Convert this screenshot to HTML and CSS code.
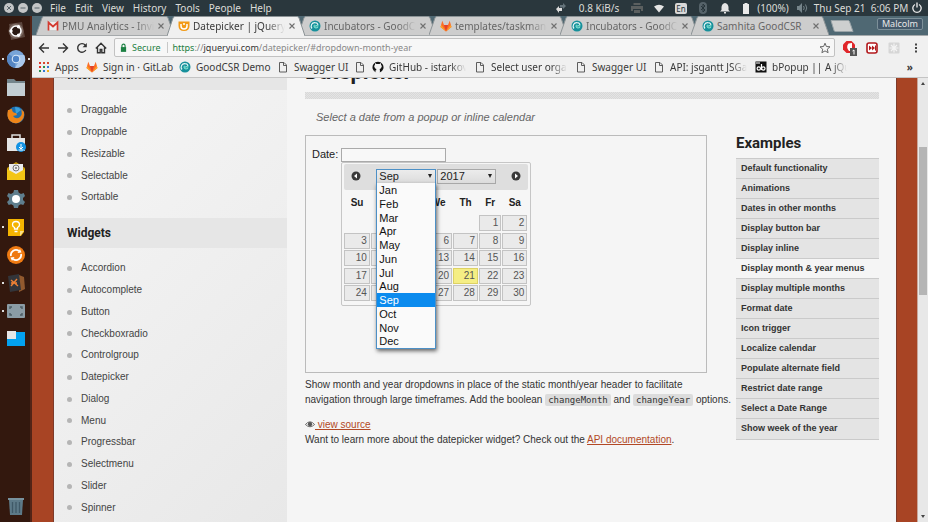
FILE: index.html
```html
<!DOCTYPE html>
<html lang="en">
<head>
<meta charset="utf-8">
<title>Datepicker | jQuery UI</title>
<link rel="stylesheet" href="styles.css">
</head>
<body>
<svg class="sprite" aria-hidden="true">
  <symbol id="swirl" viewBox="0 0 12 12"><circle cx="6" cy="6" r="5.5" fill="#17909b"/><path d="M3 8.5A3.6 3.6 0 0 1 6 2.6c2 0 3 1.300 2.800 2.600" fill="none" stroke="#e4f4f4" stroke-width="1.200"/><path d="M5.500 4.800c-1.400 2 .6 4.200 3.500 2.400M6 6.300c1-.9 2.300-.9 3.400 0" fill="none" stroke="#7fe0d0" stroke-width="1.100"/></symbol>
  <symbol id="fox" viewBox="0 0 12 12"><path d="M6 11.500 0.500 7 2.300 0.800 4 5h4l1.700-4.200L11.500 7z" fill="#fc6d26"/><path d="M6 11.500 4 5h4z" fill="#e24329"/><path d="M.5 7 6 11.500 1.400 5zM11.500 7 6 11.500 10.600 5z" fill="#fca326"/></symbol>
  <symbol id="doc" viewBox="0 0 12 12"><path d="M2.500 1.500h4.500l2.500 2.500v7h-7zM6.500 1.500v3h3" fill="none" stroke="#5d5d5d" stroke-width="1"/></symbol>
  <symbol id="tabshape" viewBox="0 0 138 20" preserveAspectRatio="none"><path d="M0 20 6 2Q6.500.5 8 .5H130Q131.500.5 132 2L138 20" fill="currentColor" stroke="#8b9295" stroke-width="1"/></symbol>
  <symbol id="x" viewBox="0 0 8 8"><path d="M1.500 1.500l5 5M6.500 1.500l-5 5" stroke="#707070" stroke-width="1.100"/></symbol>
</svg>

<header class="menubar">
  <div class="winbtns">
    <button aria-label="Close"><svg viewBox="0 0 10 10"><circle cx="5" cy="5" r="5"/><path d="M3 3l4 4M7 3 3 7"/></svg></button>
    <button aria-label="Minimize"><svg viewBox="0 0 10 10"><circle cx="5" cy="5" r="5"/><path d="M2.500 5h5"/></svg></button>
    <button aria-label="Restore"><svg viewBox="0 0 10 10"><circle cx="5" cy="5" r="5"/><path d="M2.500 5h5"/></svg></button>
  </div>
  <nav class="menus"><button>File</button><button>Edit</button><button>View</button><button>History</button><button>Tools</button><button>People</button><button>Help</button></nav>
  <div class="tray">
    <svg viewBox="0 0 12 12"><path d="M2 7l3-3v2h3v3H5v2z" fill="#ddd"/><path d="M6 3h3V1l3 3-3 3V5.500H6z" fill="#65737a"/></svg>
    <span>0.8 KiB/s</span>
    <svg viewBox="0 0 12 12"><path d="M2.500 1h7v2h-7zM0 4h12v5h-2V7H2v2H0zM3 8h6v3H3z" fill="#5b5f5f"/></svg>
    <svg viewBox="0 0 12 12"><path d="M1 4.500q5-3.500 10 0L6 10.500z" fill="#e4e4e4"/></svg>
    <span class="lang">En</span>
    <svg viewBox="0 0 12 12"><rect x="2" y="0" width="8" height="12" rx="4" fill="#56636a"/><path d="M4 4l4 4-2 2V2l2 2-4 4" fill="none" stroke="#27343a"/></svg>
    <svg viewBox="0 0 12 12"><path d="M1 9.500 2.500 8V5Q3 1.500 6 1q3 .5 3.500 4v3L11 9.500zM5 10h2v1.500H5z" fill="#e4e4e4"/></svg>
    <svg viewBox="0 0 12 12"><path d="M4.500 1h3v1h1.500v10h-6V2h1.500z" fill="#e9e9e9"/></svg>
    <span>(100%)</span>
    <svg viewBox="0 0 12 12"><path d="M1 4h2l3-3v10L3 8H1z" fill="#75848a"/><path d="M7.500 4q1.500 2 0 4M9.500 2.500q2.500 3.500 0 7" fill="none" stroke="#75848a"/></svg>
    <span>Thu Sep 21 &nbsp;6:06 PM</span>
    <svg viewBox="0 0 12 12"><path d="M4 2.500a4.200 4.200 0 1 0 4 0M6 .5v5" fill="none" stroke="#e4e4e4" stroke-width="1.400"/></svg>
  </div>
</header>

<div class="desktop">
  <aside class="launcher" aria-label="Launcher">
    <svg viewBox="0 0 18 18"><path d="M2 2 15 0l3 15L4 18Z" fill="#5c463d"/><circle cx="9" cy="9" r="7.500" fill="#9c8e87" opacity=".5"/><circle cx="9" cy="9" r="5" fill="#2a1a14" stroke="#fff" stroke-width="1.600"/><circle cx="4" cy="9" r="1.700" fill="#fff"/><circle cx="11.500" cy="4.700" r="1.700" fill="#fff"/><circle cx="11.500" cy="13.300" r="1.700" fill="#fff"/></svg>
    <svg class="running" viewBox="0 0 18 18"><circle cx="9" cy="9" r="9" fill="#78a4d8"/><path d="M9 9 1.500 4A9 9 0 0 0 8 18z" fill="#5585c2"/><path d="M9 5h8.200A9 9 0 0 1 8 18l4-7z" fill="#a9c8ec"/><circle cx="9" cy="9" r="4.300" fill="#d8e6f6"/><circle cx="9" cy="9" r="3.200" fill="#4f84c8"/></svg>
    <svg viewBox="0 0 18 18"><path d="M0 1h7l2 2h9v6H0z" fill="#74858c"/><path d="M0 5h18v13H0z" fill="#c3ced3"/></svg>
    <svg viewBox="0 0 18 18"><circle cx="9" cy="9" r="8.500" fill="#1e6fae"/><path d="M8 1q4 0 6 3l-5 4z" fill="#3aa0dc"/><path d="M1 4q-2 7 2 11 5 4 10 1 5-4 4-10l-3-3q2 5-1 8-4 3-7-1l4-1-1-2q-4 0-4-4-2 0-3 1z" fill="#ef8519"/></svg>
    <svg viewBox="0 0 18 18"><path d="M5 4V1h8v3" fill="none" stroke="#ddd" stroke-width="1.500"/><path d="M0 4h18v13H0z" fill="#e6e6e6"/><circle cx="14" cy="13" r="5" fill="#1292e4"/><path d="M14 10v4M12 13l2 2 2-2M11.500 16h5" fill="none" stroke="#fff"/></svg>
    <svg viewBox="0 0 18 18"><path d="M0 6 9 0l9 6v12H0z" fill="#c59a0b"/><path d="M2 2h14v10H2z" fill="#ececec"/><circle cx="9" cy="6" r="3" fill="none" stroke="#777"/><circle cx="9" cy="6" r="1" fill="#777"/><path d="M0 7l9 5 9-5v11H0z" fill="#f3c515"/></svg>
    <svg viewBox="0 0 18 18"><path d="M7 0h4l.6 2.600 2.400 1.300L16.700 3l1.300 3-2 2v2l2 2-1.700 3-2.500-.8-2.200 1.300L11 18H7l-.6-2.500-2.200-1.300-2.500.8L0 12l2-2V8L0 6l1.500-3 2.500.9 2.400-1.300z" fill="#5f7e8d"/><circle cx="9" cy="9" r="4" fill="#fff"/></svg>
    <svg class="running one" viewBox="0 0 18 18"><path d="M1 1h16v13l-3 4H1z" fill="#f5b400"/><path d="M17 13h-4v5z" fill="#fbe08a"/><path d="M7.500 11V9.500Q5.500 8.500 5.500 6.700 5.500 3.500 9 3.500t3.500 3.200Q12.500 8.500 10.500 9.500V11zM7.500 13.500h3" fill="none" stroke="#fff" stroke-width="1.300"/></svg>
    <svg viewBox="0 0 18 18"><circle cx="9" cy="9" r="9" fill="#ef7a12"/><path d="M4 10a5 5 0 0 1 8-5M14 8a5 5 0 0 1-8 5" fill="none" stroke="#fff" stroke-width="1.800"/><path d="M10.500 7l4-.5L13 3zM7.500 11l-4 .5L5 15z" fill="#fff"/></svg>
    <svg class="running one" viewBox="0 0 18 18"><path d="M12 1l5 2 1 12-6 3z" fill="#92592e"/><path d="M1 2l11-2 2 16-11 2z" fill="#33353a"/><path d="M4 6l7 6M4 12l6-7M4 9h6" fill="none" stroke="#ef8134" stroke-width="1.400"/></svg>
    <svg class="running one" viewBox="0 0 18 18"><rect y="2" width="18" height="14" rx="1" fill="#8b9ca5"/><path d="M3 7V5h2M13 5h2v2M15 11v2h-2M5 13H3v-2" fill="none" stroke="#4c5c64" stroke-width="1.400"/></svg>
    <svg viewBox="0 0 18 18"><path d="M0 2h18v14H0z" fill="#03a1ef"/><path d="M0 1h9v8H0z" fill="#e6e6e6"/></svg>
    <svg class="trash" viewBox="0 0 18 18"><path d="M2 3h14l-1 15H3z" fill="#5d7a88"/><path d="M1 1h16v2H1z" fill="#78929e"/><path d="M5.500 5v11M9 5v11M12.500 5v11" stroke="#3f5967" stroke-width="1.300"/></svg>
  </aside>

  <div class="browser">
    <div class="tabs" role="tablist">
      <div class="tab"><svg class="shape"><use href="#tabshape"/></svg><svg class="fav" viewBox="0 0 12 12"><path d="M1.500 2h9v8h-9z" fill="#eee"/><path d="M1.500 10.500V2.500L6 6.500l4.500-4v8" fill="none" stroke="#d33a2f" stroke-width="1.700"/></svg><span>PMU Analytics - Invitation</span><button aria-label="Close tab"><svg><use href="#x"/></svg></button></div>
      <div class="tab active"><svg class="shape"><use href="#tabshape"/></svg><svg class="fav" viewBox="0 0 12 12"><path d="M.5 1.500h11V6q0 5-5.500 5T.5 6z" fill="#f29a16"/><path d="M3 4v2q0 3 3 3t3-3V4M6 3v2" fill="none" stroke="#fff" stroke-width="1.500"/></svg><span>Datepicker | jQuery UI</span><button aria-label="Close tab"><svg><use href="#x"/></svg></button></div>
      <div class="tab"><svg class="shape"><use href="#tabshape"/></svg><svg class="fav"><use href="#swirl"/></svg><span>Incubators - GoodCSR</span><button aria-label="Close tab"><svg><use href="#x"/></svg></button></div>
      <div class="tab"><svg class="shape"><use href="#tabshape"/></svg><svg class="fav"><use href="#fox"/></svg><span>templates/taskmanager</span><button aria-label="Close tab"><svg><use href="#x"/></svg></button></div>
      <div class="tab"><svg class="shape"><use href="#tabshape"/></svg><svg class="fav"><use href="#swirl"/></svg><span>Incubators - GoodCSR</span><button aria-label="Close tab"><svg><use href="#x"/></svg></button></div>
      <div class="tab"><svg class="shape"><use href="#tabshape"/></svg><svg class="fav"><use href="#swirl"/></svg><span>Samhita GoodCSR</span><button aria-label="Close tab"><svg><use href="#x"/></svg></button></div>
      <button class="newtab" aria-label="New tab"><svg viewBox="0 0 24 12"><path d="M1 .5h17q1 0 1.500 1l3.500 10H5.500q-1 0-1.500-1z" fill="#cdcfcf" stroke="#99a3a7"/></svg></button>
      <button class="profile">Malcolm</button>
    </div>

    <div class="toolbar">
      <button aria-label="Back"><svg viewBox="0 0 12 12"><path d="M11 6H1.500M6 1.500 1.500 6 6 10.500"/></svg></button>
      <button aria-label="Forward"><svg viewBox="0 0 12 12"><path d="M1 6h9.500M6 1.500 10.500 6 6 10.500"/></svg></button>
      <button aria-label="Reload"><svg viewBox="0 0 12 12"><path d="M9.800 8A4.300 4.300 0 1 1 9.300 3.200"/><path d="M10.800 1v4.200H6.600z" fill="#333" stroke="none"/></svg></button>
      <button aria-label="Home"><svg viewBox="0 0 12 12"><path d="M.8 6.500 6 1.300l5.200 5.200M2.500 5.500v5.200h2.700V7.500h1.600v3.200h2.700V5.500"/></svg></button>
      <div class="omnibox">
        <svg class="lock" viewBox="0 0 8 10"><path d="M2.200 5V3a1.800 1.800 0 0 1 3.600 0v2" fill="none" stroke="#1c8043" stroke-width="1.300"/><path d="M1 4.500h6V10H1z" fill="#1c8043"/></svg>
        <span class="secure">Secure</span>
        <span class="url"><b>https</b>://<i>jqueryui.com</i>/datepicker/#dropdown-month-year</span>
        <svg class="star" viewBox="0 0 12 12"><path d="M6 1.200l1.400 3.300 3.600.3-2.700 2.400.8 3.500L6 8.900l-3.100 1.800.8-3.500L1 4.800l3.600-.3z" fill="none" stroke="#666"/></svg>
      </div>
      <div class="exts">
        <svg viewBox="0 0 16 16"><path d="M4.500 1h5L13 4.500v5L9.500 13h-5L1 9.500v-5z" fill="#e0262a"/><path d="M6.500 3.500q-3 3.500.5 7.500h3V3z" fill="#fff"/><path d="M8 8h7v8H8z" fill="#555"/><path d="M10.500 11l1.500-1v4.500" fill="none" stroke="#fff"/></svg>
        <svg viewBox="0 0 16 16"><rect x="3" y="3" width="10" height="10" rx="2" fill="#fff" stroke="#b2191c" stroke-width="1.600"/><path d="M5 5.500 8 8l-3 2.500zM8 5.500 11 8l-3 2.500zM11 5.500h1v5h-1z" fill="#b2191c"/></svg>
        <svg viewBox="0 0 16 16"><rect x="2.500" y="2.500" width="11" height="11" rx="1" fill="#d6d6d6"/><path d="M8 3.500v9M3.500 8h9M5 5l6 6M11 5l-6 6" stroke="#f4f4f4" stroke-width="1.200"/></svg>
        <svg viewBox="0 0 16 16"><path d="M7 3.500h2v2H7zM7 7h2v2H7zM7 10.500h2v2H7z" fill="#444"/></svg>
      </div>
    </div>

    <nav class="bookmarks">
      <a href="#"><svg viewBox="0 0 12 12"><path d="M1 1h2v2H1zM1 5h2v2H1z" fill="#e1352b"/><path d="M5 1h2v2H5zM9 1h2v2H9z" fill="#d8472e"/><path d="M5 5h2v2H5zM1 9h2v2H1z" fill="#2a8f4a"/><path d="M9 5h2v2H9zM5 9h2v2H5z" fill="#3478d6"/><path d="M9 9h2v2H9z" fill="#eeb01a"/></svg><span>Apps</span></a>
      <a href="#"><svg><use href="#fox"/></svg><span>Sign in · GitLab</span></a>
      <a href="#"><svg><use href="#swirl"/></svg><span>GoodCSR Demo</span></a>
      <a href="#"><svg><use href="#doc"/></svg><span>Swagger UI</span></a>
      <a href="#" aria-label="Page"><svg><use href="#doc"/></svg></a>
      <a href="#"><svg viewBox="0 0 12 12"><path d="M4.300 11.500V9.700Q2.700 10 2 8.600M4.300 11.500A5.500 5.500 0 1 1 7.700 11.500V9.200q0-.8-.5-1.200Q9.700 7.700 9.700 5.300 9.600 4.400 9 3.800V2.200L7.400 3H4.600L3 2.200V3.800Q2.400 4.400 2.300 5.300 2.300 7.700 4.800 8q-.4.400-.5 1z" fill="#111"/><path d="M4.800 8Q2.600 7.500 2.600 5.300q0-.8.6-1.400V2.500l1.500.7h2.600l1.500-.7v1.400q.6.600.6 1.400Q9.400 7.500 7.200 8q.5.400.5 1.200v2.400H4.300V9.200q0-.8.5-1.200z" fill="#f2f2f2"/></svg><span class="fade">GitHub - istarkov/google</span></a>
      <a href="#"><svg><use href="#doc"/></svg><span class="fade">Select user organisation</span></a>
      <a href="#"><svg><use href="#doc"/></svg><span>Swagger UI</span></a>
      <a href="#"><svg><use href="#doc"/></svg><span class="fade">API: jsgantt JSGantt</span></a>
      <a href="#"><svg viewBox="0 0 12 12"><path d="M.5.5h11v11H.5z" fill="#111"/><circle cx="3.800" cy="7.500" r="1.700" fill="none" stroke="#fff" stroke-width="1.200"/><circle cx="8.300" cy="7.500" r="1.700" fill="none" stroke="#fff" stroke-width="1.200"/><path d="M6.500 3v6M1 2h4" stroke="#fff" stroke-width="1.200"/></svg><span class="fade">bPopup || A jQuery plugin</span></a>
      <button aria-label="More bookmarks">»</button>
    </nav>

    <div class="viewport">
      <div class="page">
        <aside class="sidebar">
          <h3 class="cut">Interactions</h3>
          <ul>
            <li><a href="#">Draggable</a></li><li><a href="#">Droppable</a></li><li><a href="#">Resizable</a></li><li><a href="#">Selectable</a></li><li><a href="#">Sortable</a></li>
          </ul>
          <h3>Widgets</h3>
          <ul>
            <li><a href="#">Accordion</a></li><li><a href="#">Autocomplete</a></li><li><a href="#">Button</a></li><li><a href="#">Checkboxradio</a></li><li><a href="#">Controlgroup</a></li><li><a href="#">Datepicker</a></li><li><a href="#">Dialog</a></li><li><a href="#">Menu</a></li><li><a href="#">Progressbar</a></li><li><a href="#">Selectmenu</a></li><li><a href="#">Slider</a></li><li><a href="#">Spinner</a></li>
          </ul>
        </aside>

        <main class="content">
          <h1>Datepicker</h1>
          <div class="rule"></div>
          <div class="columns">
            <section class="demo-column">
              <p class="lead">Select a date from a popup or inline calendar</p>
              <div class="demo">
                <label for="date">Date:</label>
                <div class="field">
                  <input id="date" type="text">
                  <div class="datepicker">
                    <div class="dp-head">
                      <button aria-label="Prev"><svg viewBox="0 0 10 10"><circle cx="5" cy="5" r="4.500" fill="#3a3a3a"/><path d="M6 2.500v5L3 5z" fill="#fff"/></svg></button>
                      <span class="dp-select focus"><select aria-label="Month"><option>Sep</option></select>
                        <ul class="months" role="listbox"><li>Jan</li><li>Feb</li><li>Mar</li><li>Apr</li><li>May</li><li>Jun</li><li>Jul</li><li>Aug</li><li class="on">Sep</li><li>Oct</li><li>Nov</li><li>Dec</li></ul>
                      </span>
                      <span class="dp-select"><select aria-label="Year"><option>2017</option></select></span>
                      <button aria-label="Next"><svg viewBox="0 0 10 10"><circle cx="5" cy="5" r="4.500" fill="#3a3a3a"/><path d="M4 2.500v5L7 5z" fill="#fff"/></svg></button>
                    </div>
                    <table>
                      <thead><tr><th>Su</th><th>Mo</th><th>Tu</th><th>We</th><th>Th</th><th>Fr</th><th>Sa</th></tr></thead>
                      <tbody>
                        <tr><td></td><td></td><td></td><td></td><td></td><td><a href="#">1</a></td><td><a href="#">2</a></td></tr>
                        <tr><td><a href="#">3</a></td><td><a href="#">4</a></td><td><a href="#">5</a></td><td><a href="#">6</a></td><td><a href="#">7</a></td><td><a href="#">8</a></td><td><a href="#">9</a></td></tr>
                        <tr><td><a href="#">10</a></td><td><a href="#">11</a></td><td><a href="#">12</a></td><td><a href="#">13</a></td><td><a href="#">14</a></td><td><a href="#">15</a></td><td><a href="#">16</a></td></tr>
                        <tr><td><a href="#">17</a></td><td><a href="#">18</a></td><td><a href="#">19</a></td><td><a href="#">20</a></td><td><a class="today" href="#">21</a></td><td><a href="#">22</a></td><td><a href="#">23</a></td></tr>
                        <tr><td><a href="#">24</a></td><td><a href="#">25</a></td><td><a href="#">26</a></td><td><a href="#">27</a></td><td><a href="#">28</a></td><td><a href="#">29</a></td><td><a href="#">30</a></td></tr>
                      </tbody>
                    </table>
                  </div>
                </div>
              </div>
              <p class="desc">Show month and year dropdowns in place of the static month/year header to facilitate<br>navigation through large timeframes. Add the boolean <code>changeMonth</code> and <code>changeYear</code> options.</p>
              <p class="source"><a href="#"><svg viewBox="0 0 12 10"><path d="M.5 5Q6-1.500 11.500 5 6 10.500.5 5z" fill="none" stroke="#555"/><circle cx="6" cy="4.700" r="2.600" fill="#555"/></svg> view source</a></p>
              <p>Want to learn more about the datepicker widget? Check out the <a href="#">API documentation</a>.</p>
            </section>
            <aside class="examples">
              <h2>Examples</h2>
              <ul>
                <li><a href="#">Default functionality</a></li><li><a href="#">Animations</a></li><li><a href="#">Dates in other months</a></li><li><a href="#">Display button bar</a></li><li><a href="#">Display inline</a></li><li class="current"><a href="#">Display month &amp; year menus</a></li><li><a href="#">Display multiple months</a></li><li><a href="#">Format date</a></li><li><a href="#">Icon trigger</a></li><li><a href="#">Localize calendar</a></li><li><a href="#">Populate alternate field</a></li><li><a href="#">Restrict date range</a></li><li><a href="#">Select a Date Range</a></li><li><a href="#">Show week of the year</a></li>
              </ul>
            </aside>
          </div>
        </main>
      </div>
      <div class="scrollbar" aria-hidden="true"><i class="up"></i><i class="thumb"></i><i class="down"></i></div>
    </div>
  </div>
</div>
</body>
</html>
```
FILE: styles.css
```css
* { box-sizing: border-box; }
body {
  margin: 0;
  height: 100vh;
  display: flex;
  flex-direction: column;
  overflow: hidden;
  background: #33180e;
  font: 10px/15px "Liberation Sans", sans-serif;
  color: #333;
}
button {
  padding: 0;
  border: 0;
  background: none;
  font: inherit;
  color: inherit;
  display: flex;
  align-items: center;
}
svg { flex: none; display: block; }
ul { margin: 0; padding: 0; list-style: none; }
p, h1, h2, h3 { margin: 0; }
.sprite { position: absolute; width: 0; height: 0; }

/* System menu bar */
.menubar {
  flex: none;
  height: 16px;
  display: flex;
  align-items: center;
  background: #2a373d;
  color: #dcdcd8;
  font: 10px/16px "Noto Sans", sans-serif;
}
.winbtns { display: flex; gap: 4px; padding: 0 8px 0 4px; }
.winbtns svg { width: 10px; height: 10px; fill: #c3c5c6; stroke: #59646a; }
.winbtns circle { stroke: none; }
.menus { display: flex; gap: 9px; }
.tray {
  margin-left: auto;
  display: grid;
  grid-template-columns: 24px 54px 22px 22px 22px 22px 22px 20px 34px 24px 94px 18px;
  align-items: center;
  padding-right: 2px;
  white-space: nowrap;
}
.tray svg { width: 12px; height: 12px; justify-self: center; }
.tray span { justify-self: center; }
.tray .lang {
  padding: 0 1px;
  border-radius: 2px;
  background: #d8d8d8;
  color: #2a373d;
  font-size: 8px;
  line-height: 11px;
}

/* Launcher */
.desktop { flex: 1; min-height: 0; display: flex; }
.launcher {
  flex: none;
  width: 32px;
  display: flex;
  flex-direction: column;
  align-items: center;
  gap: 10px;
  padding: 6px 1px 7px 0;
  background: linear-gradient(90deg, #33180e 30px, #522417 30px);
}
.launcher svg { width: 18px; height: 18px; overflow: visible; }
.launcher .running { width: 28px; border: solid transparent; border-width: 0 5px; background: radial-gradient(circle at 1px 9px, #ddd 1px, transparent 1px), radial-gradient(circle at 27px 9px, #ddd 1px, transparent 1px); background-origin: border-box; }
.launcher .one { background: radial-gradient(circle at 1px 9px, #ddd 1px, transparent 1px); background-origin: border-box; }
.launcher .trash { margin-top: auto; }

/* Browser chrome */
.browser {
  flex: 1;
  min-width: 0;
  display: flex;
  flex-direction: column;
}
.tabs, .toolbar, .bookmarks { font: 10px/16px "Noto Sans", sans-serif; }
.tabs {
  flex: none;
  height: 20px;
  display: flex;
  align-items: flex-end;
  padding: 0 5px 0 4px;
  background: #4f6873;
  border-bottom: 1px solid #a5a9ab;
}
.tab {
  position: relative;
  flex: 0 1 138px;
  min-width: 0;
  height: 19px;
  margin-right: -7px;
  padding: 0 9px 0 11px;
  display: flex;
  align-items: center;
  gap: 3px;
  color: #666;
}
.tab > * { position: relative; }
.tab .shape { position: absolute; inset: 0; width: 100%; height: 100%; color: #cdcdcd; overflow: visible; }
.tab.active { z-index: 1; height: 20px; margin-bottom: -1px; color: #3a3a3a; }
.tab.active .shape { color: #f0f0f0; }
.fav { width: 12px; height: 12px; }
.tab span { flex: 1; overflow: hidden; white-space: nowrap; }
.tab span, .fade { -webkit-mask: linear-gradient(90deg, #000 80%, transparent); mask: linear-gradient(90deg, #000 80%, transparent); }
.tab:nth-child(6) span { -webkit-mask: none; mask: none; }
.tab button svg { width: 8px; height: 8px; }
.newtab { margin-left: 8px; align-self: center; }
.newtab svg { width: 24px; height: 12px; }
.profile {
  margin-left: auto;
  align-self: flex-start;
  margin-top: 2px;
  padding: 0 4px;
  border: 1px solid #7d9099;
  border-radius: 2px;
  background: #44596a;
  color: #e8e8e8;
  font-size: 9px;
  line-height: 10px;
}
.toolbar {
  flex: none;
  height: 22px;
  display: flex;
  align-items: center;
  gap: 7px;
  padding: 1px 4px 0 6px;
  background: #f0f0f0;
}
.toolbar button svg { width: 12px; height: 12px; fill: none; stroke: #333; stroke-width: 1.400; }
.omnibox {
  flex: 1;
  min-width: 0;
  height: 19px;
  display: flex;
  align-items: center;
  padding: 0 3px 0 5px;
  border: 1px solid #c2c2c2;
  border-radius: 2px;
  background: #f7f7f7;
  color: #888;
  font-size: 9px;
  white-space: nowrap;
}
.lock { width: 7px; height: 9px; }
.secure { margin: 0 6px 0 5px; color: #1c8043; }
.url { flex: 1; border-left: 1px solid #c8c8c8; padding-left: 5px; line-height: 11px; }
.url b { font-weight: 400; color: #1c8043; }
.url i { font-style: normal; color: #333; }
.star { width: 12px; height: 12px; }
.exts { display: flex; gap: 6px; }
.exts svg { width: 16px; height: 16px; }
.bookmarks {
  flex: none;
  height: 20px;
  display: grid;
  grid-template-columns: 48px 93px 98px 77px 18px 102px 101px 78px 102px 100px 1fr;
  align-items: center;
  padding: 0 15px 1px 6px;
  background: #f0f0f0;
  border-bottom: 1px solid #c4c4c4;
  color: #3a3a3a;
}
.bookmarks a { display: flex; align-items: center; gap: 5px; min-width: 0; color: inherit; text-decoration: none; white-space: nowrap; }
.bookmarks svg { width: 12px; height: 12px; }
.bookmarks .fade { overflow: hidden; margin-right: 8px; }
.bookmarks button { justify-self: end; font-weight: 700; }

/* Web page */
.viewport { flex: 1; min-height: 0; display: flex; background: #a84424; }
.page {
  flex: 1;
  min-width: 0;
  margin: 0 21px;
  display: flex;
  overflow: hidden;
  background: #f5f5f5;
  border-left: 1px solid #7d3a2a;
  box-shadow: 1px 0 #7d3a2a;
}
.sidebar {
  flex: none;
  width: 233px;
  background: linear-gradient(135deg, #f6f6f6, #e8e8e8);
  color: #444;
}
.sidebar h3 {
  padding-left: 13px;
  background: #e6e6e6;
  color: #222;
  font: 700 12px/30px Roboto, sans-serif;
}
.sidebar .cut { margin-top: -18px; }
.sidebar ul { padding: 9px 13px 10px; }
.sidebar li { line-height: 22px; display: flex; align-items: center; gap: 9px; }
.sidebar li:nth-child(4n) { line-height: 21px; }
.sidebar li::before { content: ""; width: 5px; height: 5px; border-radius: 50%; background: #b5b5b5; }
.sidebar a { color: inherit; text-decoration: none; }
.content { flex: 1; min-width: 0; padding: 0 17px 0 18px; }
.content h1 { margin-top: -19px; font: 700 22px/26px Roboto, sans-serif; color: #222; }
.rule {
  height: 7px;
  margin-top: 7px;
  background: repeating-conic-gradient(#e4e4e4 0 25%, #d8d8d8 0 50%) 0 0 / 2px 2px;
}
.columns { display: grid; grid-template-columns: 402px 1fr; column-gap: 29px; }
.demo-column { min-width: 0; }
.lead { padding: 10px 11px; font: italic 11px/16px "Liberation Sans", sans-serif; color: #666; }
.demo {
  min-height: 238px;
  padding: 12px 6px;
  display: flex;
  gap: 3px;
  align-items: flex-start;
  border: 1px solid #bbb;
  font-size: 11px;
  line-height: 12px;
  color: #222;
  margin-bottom: 4px;
}
.field { position: relative; }
.field input { display: block; width: 105px; height: 14px; border: 1px solid #aaa; background: #f8f8f8; font: inherit; }
.datepicker {
  position: absolute;
  left: 0;
  top: 14px;
  width: 190px;
  padding: 1px 2px 2px;
  border: 1px solid #c6c6c6;
  border-radius: 2px;
  background: #f6f6f6;
}
.dp-head {
  height: 26px;
  display: flex;
  align-items: center;
  padding: 0 7px 2px;
  border-radius: 2px;
  background: #dedede;
}
.dp-head svg { width: 10px; height: 10px; }
.dp-head button:last-child { margin-left: auto; }
.dp-select { position: relative; margin-right: 1px; }
.dp-head button:first-child { margin-right: 15px; }
.dp-select select {
  appearance: none;
  display: block;
  width: 59px;
  height: 15px;
  padding: 0 2px;
  border: 1px solid #a8a8a8;
  border-radius: 0;
  background: linear-gradient(#ececec, #dcdcdc);
  color: #222;
  font: 11px/13px "Liberation Sans", sans-serif;
}
.dp-select.focus select { width: 60px; border-color: #4d90c6; }
.dp-select::after {
  content: "";
  position: absolute;
  right: 4px;
  top: 5px;
  border: solid transparent;
  border-width: 4px 2px 0;
  border-top-color: #222;
}
.months {
  position: absolute;
  z-index: 2;
  left: 0;
  top: 14px;
  width: 60px;
  border: 1px solid #4d90c6;
  border-top: 0;
  background: #fafafa;
  box-shadow: 1px 2px 4px rgba(0, 0, 0, .6);
}
.months li { padding-left: 2px; line-height: 14px; color: #111; }
.months li:nth-child(4n) { line-height: 13px; }
.months .on { background: #0b8bee; color: #fff; }
.datepicker table { width: 100%; border-collapse: collapse; font-size: 10px; }
.datepicker th { padding: 0 6px 0 5px; height: 25px; font-weight: 700; line-height: 24px; }
.datepicker td { height: 18px; padding: 0 1px 0 0; vertical-align: top; }
.datepicker tbody tr:nth-child(even) td { height: 17px; }
.datepicker td a {
  display: block;
  padding-right: 2px;
  border: 1px solid #c3c3c3;
  background: #eaeaea;
  color: #555;
  text-align: right;
  text-decoration: none;
  line-height: 14px;
}
.datepicker td .today { background: #f5ee84; border-color: #ddd164; }
.desc { white-space: nowrap; margin-bottom: 10px; }
code { padding: 1px 3px; border-radius: 2px; background: #dcdcdc; font: 9px/12px "DejaVu Sans Mono", monospace; }
.demo-column a:not(td a) { color: #b24926; }
.source svg { display: inline; width: 10px; height: 9px; vertical-align: -1px; }
.examples { padding-top: 33px; }
.examples h2 { font: 700 15px/22px Roboto, sans-serif; color: #222; margin-bottom: 4px; }
.examples li { height: 20px; padding: 0 5px; border-top: 1px solid #cacaca; background: #e4e4e4; font: 700 9px/19px "Liberation Sans", sans-serif; }
.examples li:last-child { height: 22px; border-bottom: 1px solid #cacaca; }
.examples .current { background: #f5f5f5; }
.examples a { color: #333; text-decoration: none; }
.scrollbar { flex: none; width: 11px; display: flex; flex-direction: column; align-items: center; background: #e8e8e8; border-left: 1px solid #c9a79b; padding: 4px 1px; }
.scrollbar .up { border: solid transparent; border-width: 0 2px 3px; border-bottom-color: #444; }
.scrollbar .down { border: solid transparent; border-width: 3px 2px 0; border-top-color: #444; margin-top: auto; }
.scrollbar .thumb { width: 8px; height: 34%; margin-top: 62px; background: #b5b5b5; }
```
